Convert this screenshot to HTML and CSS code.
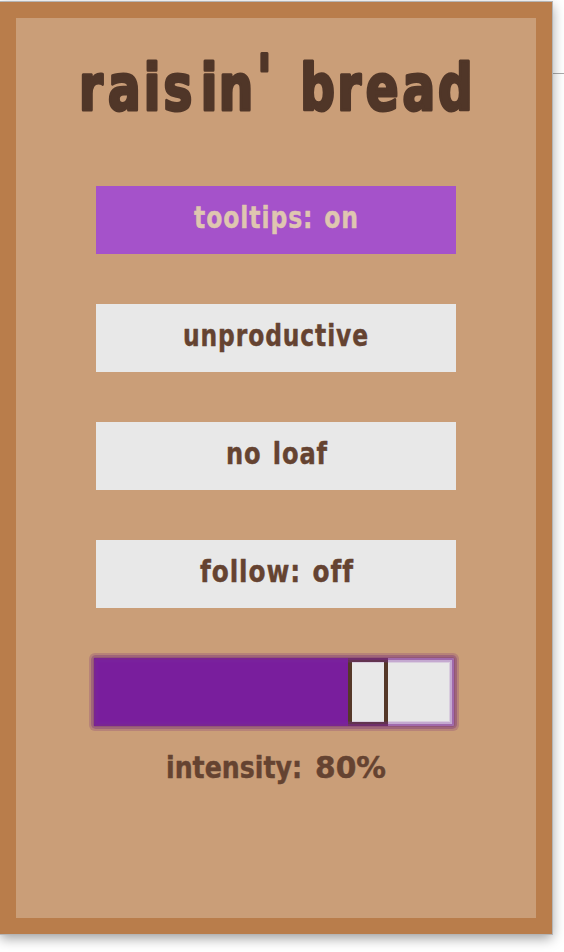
FILE: index.html
```
<!DOCTYPE html>
<html lang="en">
<head>
<meta charset="utf-8">
<title>raisin' bread</title>
<link rel="stylesheet" href="styles.css">
</head>
<body>
<div class="divider"></div>
<main class="panel">
  <h1 class="title">
    <svg class="lettering" width="420" height="90">
      <text transform="scale(.84 1)" y="68.5" x="15.5 50 92.5 116 160.5 182 227.5 257 279 323 357 400.5 443" dy="0 0 0 0 0 0 -11 11">raisin' bread</text>
    </svg>
  </h1>
  <div class="options">
    <button class="option active"><svg class="label" width="360" height="68">
      <text x="98" y="42" textLength="165" lengthAdjust="spacingAndGlyphs">tooltips: on</text>
    </svg></button>
    <button class="option"><svg class="label" width="360" height="68">
      <text x="87" y="42" textLength="186" lengthAdjust="spacingAndGlyphs">unproductive</text>
    </svg></button>
    <button class="option"><svg class="label" width="360" height="68">
      <text x="130" y="42" textLength="102" lengthAdjust="spacingAndGlyphs">no loaf</text>
    </svg></button>
    <button class="option"><svg class="label" width="360" height="68">
      <text x="104" y="42" textLength="154" lengthAdjust="spacingAndGlyphs">follow: off</text>
    </svg></button>
  </div>
  <div class="slider">
    <div class="fill"></div>
    <div class="thumb"></div>
  </div>
  <p class="caption"><svg class="label caption-text" width="360" height="50">
    <text x="70" y="34" textLength="136" lengthAdjust="spacingAndGlyphs">intensity:</text>
    <text x="219" y="34" textLength="71" lengthAdjust="spacingAndGlyphs">80%</text>
  </svg></p>
</main>
</body>
</html>
```
FILE: styles.css
```
* { box-sizing: border-box; }
body {
  margin: 0;
  padding-top: 2px;
  height: 952px;
  overflow: hidden;
  background: #fff;
}
.divider {
  position: absolute;
  top: 73px;
  right: 0;
  width: 12px;
  height: 1px;
  background: #aaa;
}
.panel {
  position: relative;
  width: 552px;
  height: 932px;
  display: flex;
  flex-direction: column;
  align-items: center;
  border: 16px solid #b97d4b;
  background: #ca9e78;
  box-shadow: 0 0 0 1px #b5b5b5, 0 4px 12px rgba(0, 0, 0, .4);
}
svg {
  display: block;
  overflow: visible;
}
.title {
  margin: 24px 0 54px;
  height: 90px;
}
.lettering, .label {
  font-family: "DejaVu Sans Condensed", "DejaVu Sans", sans-serif;
  font-stretch: condensed;
  font-weight: bold;
  stroke-linejoin: round;
}
.lettering {
  font-size: 64px;
  fill: #503628;
  stroke: #503628;
  stroke-width: 3px;
}
.options {
  display: grid;
  gap: 50px;
}
.option {
  width: 360px;
  height: 68px;
  padding: 0;
  border: 0;
  background: #e8e8e8;
}
.label {
  font-size: 29.5px;
  letter-spacing: 1px;
  word-spacing: 2px;
  fill: #654331;
  stroke: #654331;
  stroke-width: .4px;
}
.caption-text {
  letter-spacing: 0;
}
.active { background: #a552ca; }
.active .label {
  fill: #dfc6b0;
  stroke: #dfc6b0;
}
.slider {
  position: relative;
  display: flex;
  width: 360px;
  height: 68px;
  margin: 50px 4px 0 0;
  background: #e8e8e8;
  box-shadow: 0 0 0 1px #935675, 0 0 0 3px #9f6579, 0 0 0 5px #b78378;
  border-radius: 2px;
}
.slider::after {
  content: "";
  position: absolute;
  inset: 0;
  border-radius: 2px;
  box-shadow: inset 0 0 0 2px rgba(124, 41, 136, .5), inset 0 0 0 4px rgba(124, 41, 160, .22), inset 0 0 0 5px rgba(124, 41, 160, .14);
}
.fill {
  width: 254px;
  background: #791e9d;
}
.thumb {
  width: 40px;
  border: 4px solid #553828;
}
.caption {
  width: 360px;
  height: 50px;
  margin: 18px 0 0;
}
```
